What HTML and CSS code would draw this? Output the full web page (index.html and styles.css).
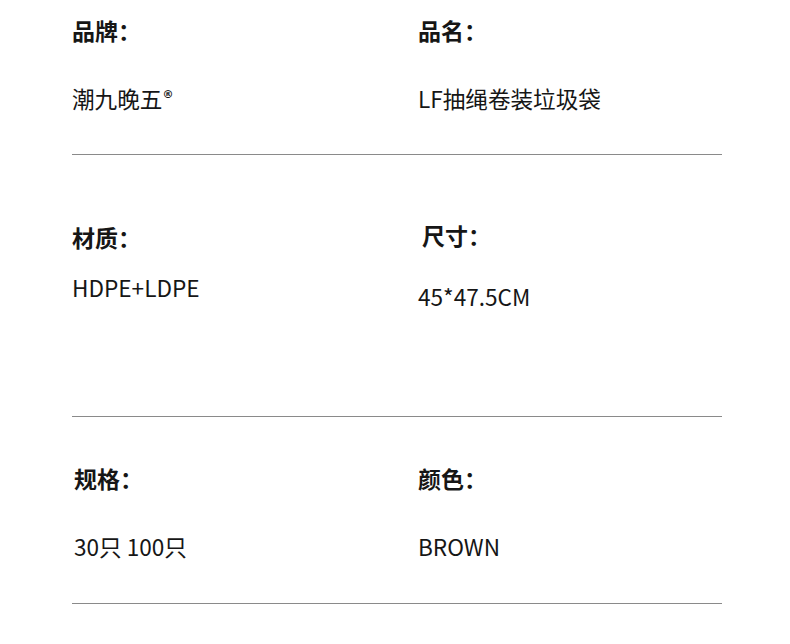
FILE: index.html
```html
<!DOCTYPE html>
<html lang="zh-CN">
<head>
<meta charset="utf-8">
<link rel="stylesheet" href="styles.css">
</head>
<body>
<div class="sheet">
  <section class="row row-1">
    <div class="cell">
      <div class="label">品牌：</div>
      <div class="value">潮九晚五<sup class="reg">®</sup></div>
    </div>
    <div class="cell">
      <div class="label">品名：</div>
      <div class="value">LF抽绳卷装垃圾袋</div>
    </div>
  </section>
  <section class="row row-2">
    <div class="cell">
      <div class="label">材质：</div>
      <div class="value v-left">HDPE+LDPE</div>
    </div>
    <div class="cell">
      <div class="label l-shift">尺寸：</div>
      <div class="value v-right">45*47.5CM</div>
    </div>
  </section>
  <section class="row row-3">
    <div class="cell">
      <div class="label l-shift2">规格：</div>
      <div class="value v-shift">30只 100只</div>
    </div>
    <div class="cell">
      <div class="label">颜色：</div>
      <div class="value">BROWN</div>
    </div>
  </section>
</div>
</body>
</html>
```

FILE: styles.css
```css
html, body {
  margin: 0;
  padding: 0;
  background: #ffffff;
}
body {
  font-family: "Noto Sans CJK SC", "Noto Sans", sans-serif;
  color: #161616;
}
.sheet {
  width: 650px;
  margin-left: 72px;
}
.row {
  display: grid;
  grid-template-columns: 346px 304px;
  border-bottom: 1px solid #8a8a8a;
  box-sizing: border-box;
}
.cell {
  display: flex;
  flex-direction: column;
}
.label {
  font-size: 23px;
  font-weight: 700;
  line-height: 30px;
  height: 30px;
}
.value {
  font-size: 22.6px;
  font-weight: 400;
  line-height: 30px;
  height: 30px;
}
.reg {
  font-family: "DejaVu Sans", sans-serif;
  font-size: 11px;
  font-weight: 700;
  vertical-align: top;
  line-height: 1;
  position: relative;
  top: 5px;
  margin-left: 0;
}
.row-1 {
  padding-top: 15px;
  height: 155px;
}
.row-1 .value { margin-top: 39px; }
.row-2 {
  padding-top: 67px;
  height: 262px;
}
.row-2 .l-shift { margin-left: 4px; margin-top: -2px; }
.v-left { margin-top: 21px; }
.v-right { margin-top: 32px; }
.row-3 {
  padding-top: 46px;
  height: 187px;
}
.row-3 .value { margin-top: 39px; }
.l-shift2, .v-shift { margin-left: 2px; }
```
